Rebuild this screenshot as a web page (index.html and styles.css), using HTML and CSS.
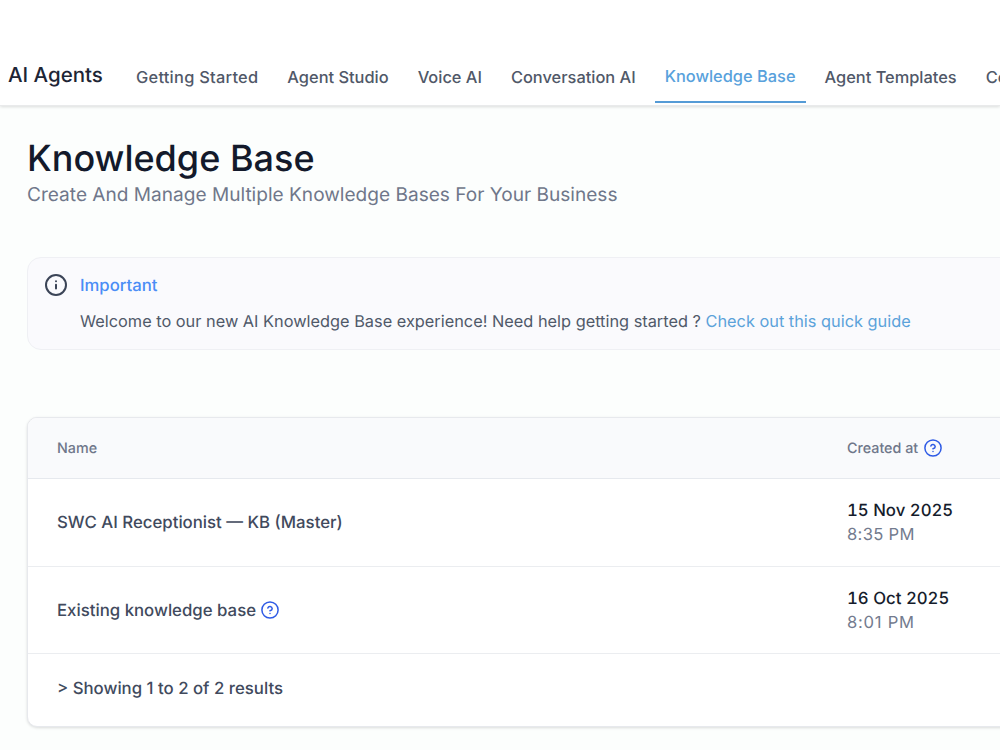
FILE: index.html
```html
<!DOCTYPE html>
<html lang="en">
<head>
    <meta charset="UTF-8">
    <title>Knowledge Base</title>
    <link rel="stylesheet" href="styles.css">
</head>
<body>

<svg class="sprite">
    <symbol id="help" viewBox="0 0 24 24">
        <circle cx="12" cy="12" r="10.8"/>
        <path d="M9.1 9.3a3 3 0 0 1 5.8.9c0 1.9-2.9 2.9-2.9 2.9M12 16.8h.01"/>
    </symbol>
</svg>

<header class="topbar">
    <div class="brand">AI Agents</div>
    <nav class="tabs">
        <a class="tab wide">Getting Started</a>
        <a class="tab">Agent Studio</a>
        <a class="tab">Voice AI</a>
        <a class="tab">Conversation AI</a>
        <a class="tab active">Knowledge Base</a>
        <a class="tab">Agent Templates</a>
        <a class="tab">Content AI</a>
    </nav>
</header>

<main class="page">
    <h1>Knowledge Base</h1>
    <p class="subtitle">Create And Manage Multiple Knowledge Bases For Your Business</p>

    <section class="notice">
        <svg class="info" viewBox="0 0 24 24">
            <circle cx="12" cy="12" r="10"/>
            <path d="M12 11.7v3.9M12 8.3h.01"/>
        </svg>
        <div>
            <h2>Important</h2>
            <p>Welcome to our new AI Knowledge Base experience! Need help getting started ? <a>Check out this quick guide</a></p>
        </div>
    </section>

    <section class="table">
        <div class="row head">
            <div class="cell"><span class="label">Name</span></div>
            <div class="cell"><span class="label">Created at</span><svg class="help"><use href="#help"/></svg></div>
        </div>
        <div class="row">
            <div class="cell"><span class="name">SWC AI Receptionist — KB (Master)</span></div>
            <div class="cell stack">
                <span class="date">15 Nov 2025</span>
                <span class="time">8:35 PM</span>
            </div>
        </div>
        <div class="row">
            <div class="cell"><span class="name">Existing knowledge base</span><svg class="help"><use href="#help"/></svg></div>
            <div class="cell stack">
                <span class="date">16 Oct 2025</span>
                <span class="time spaced">8:01 PM</span>
            </div>
        </div>
        <div class="results">&gt; Showing 1 to 2 of 2 results</div>
    </section>
</main>

</body>
</html>
```
FILE: styles.css
```css
*, *::before, *::after {
    box-sizing: border-box;
    margin: 0;
    padding: 0;
}

body {
    height: 750px;
    overflow: hidden;
    background: #fcfefd;
    color: #414a5d;
    font-family: Inter, "Liberation Sans", sans-serif;
    font-size: 17px;
    text-rendering: geometricPrecision;
}

svg {
    flex: none;
    fill: none;
    stroke: currentColor;
    stroke-linecap: round;
    stroke-linejoin: round;
}

.sprite {
    display: none;
}

/* top navigation */
.topbar {
    display: flex;
    height: 106px;
    padding: 47px 0 0 8px;
    background: #fff;
    border-bottom: 1px solid #e9eaeb;
    box-shadow: 0 1px 3px #0002;
}

.brand {
    flex: none;
    width: 118px;
    font-size: 20.5px;
    font-weight: 500;
    line-height: 55px;
    color: #1d2535;
}

.tabs {
    display: flex;
    gap: 9px;
}

.tab {
    height: 56px;
    padding: 0 10px;
    font-size: 16.4px;
    font-weight: 500;
    line-height: 61px;
    white-space: nowrap;
    color: #505868;
}

.tab.wide {
    letter-spacing: 0.26px;
}

.tab.active {
    line-height: 59px;
    color: #58a1dc;
    border-bottom: 2px solid #559bd6;
}

/* page */
.page {
    width: 1210px;
    padding: 29px 0 0 27px;
}

h1 {
    font-size: 36px;
    font-weight: 500;
    line-height: 46px;
    color: #131a2b;
}

.subtitle {
    font-size: 19.08px;
    line-height: 27px;
    color: #6f778a;
}

.notice {
    display: flex;
    gap: 12px;
    height: 93px;
    margin-top: 49px;
    padding: 16px 16px 14px;
    background: #fafafd;
    border: 1px solid #eff0f4;
    border-radius: 14px;
}

.notice .info {
    width: 24px;
    height: 24px;
    margin-top: -1px;
    stroke-width: 2;
    color: #3b4457;
}

.notice h2 {
    font-size: 16.7px;
    font-weight: 500;
    line-height: 24px;
    color: #4a8df6;
}

.notice p {
    margin-top: 11px;
    font-size: 16.33px;
    line-height: 24px;
    color: #505969;
}

.notice a {
    color: #5ba2da;
}

/* knowledge base list */
.table {
    height: 310px;
    margin-top: 67px;
    background: #fff;
    border: 1px solid #e7e9ed;
    border-radius: 10px;
    box-shadow: 0 1px 3px #0002;
    overflow: hidden;
}

.row {
    display: grid;
    grid-template-columns: 790px 1fr;
    height: 87.5px;
    padding-left: 29px;
    border-bottom: 1px solid #ebedf0;
}

.row.head {
    height: 61px;
    background: #f9fafc;
    border-color: #e6e9ee;
}

.cell {
    display: flex;
    align-items: center;
    gap: 6px;
}

.stack {
    flex-direction: column;
    align-items: flex-start;
    justify-content: center;
    gap: 0;
    padding-top: 2px;
}

.label {
    font-size: 14.3px;
    font-weight: 500;
    color: #6f778a;
}

.name, .results {
    font-size: 16.8px;
    font-weight: 500;
    color: #414a5d;
}

.name {
    padding-top: 2px;
}

.name + .help {
    margin-left: -1px;
}

.date {
    font-size: 16.75px;
    font-weight: 500;
    line-height: 24px;
    font-variant-numeric: tabular-nums;
    color: #151c2c;
}

.time {
    font-size: 16.6px;
    line-height: 24px;
    letter-spacing: 0.3px;
    color: #737b8e;
}

.time.spaced {
    letter-spacing: 0.75px;
}

.help {
    width: 18px;
    height: 18px;
    stroke-width: 2;
    color: #2f5be5;
}

.results {
    padding-left: 29px;
    line-height: 70px;
}
```
